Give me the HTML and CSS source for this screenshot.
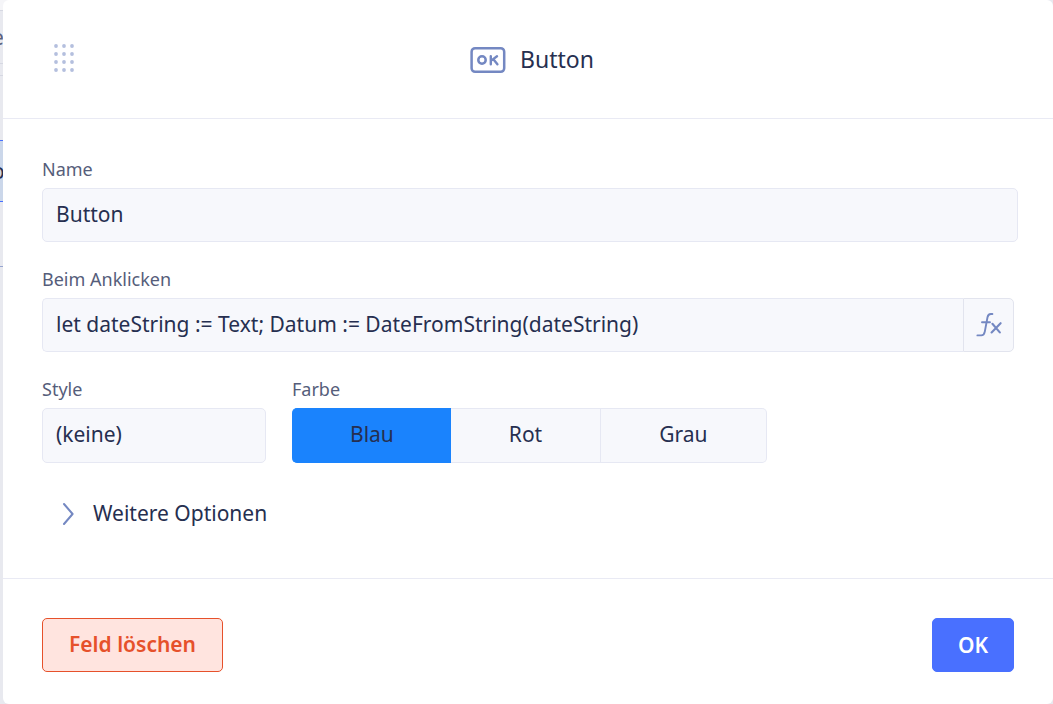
FILE: index.html
```html
<!DOCTYPE html>
<html lang="de">
<head>
<meta charset="utf-8">
<meta name="viewport" content="width=device-width, initial-scale=1">
<title>Button</title>
<link rel="stylesheet" href="styles.css">
</head>
<body>
<div class="backdrop" aria-hidden="true">
  <div class="strip strip-top"></div>
  <div class="strip strip-head"><span>e</span></div>
  <div class="strip strip-gap"></div>
  <div class="strip strip-space"></div>
  <div class="strip strip-selected"><span>o</span></div>
  <div class="strip strip-row"></div>
</div>
<main class="dialog">
  <header class="header">
    <svg class="grip" width="22" height="30" viewBox="0 0 22 30" fill="#b4bfde" aria-hidden="true">
      <circle cx="3" cy="3" r="1.9"/><circle cx="11" cy="3" r="1.9"/><circle cx="19" cy="3" r="1.9"/>
      <circle cx="3" cy="11" r="1.9"/><circle cx="11" cy="11" r="1.9"/><circle cx="19" cy="11" r="1.9"/>
      <circle cx="3" cy="19" r="1.9"/><circle cx="11" cy="19" r="1.9"/><circle cx="19" cy="19" r="1.9"/>
      <circle cx="3" cy="27" r="1.9"/><circle cx="11" cy="27" r="1.9"/><circle cx="19" cy="27" r="1.9"/>
    </svg>
    <h1 class="title">
      <svg width="36" height="28" viewBox="0 0 36 28" fill="none" stroke="#7488c2" aria-hidden="true">
        <rect x="1.6" y="2.2" width="32.6" height="23.6" rx="3.5" stroke-width="2.5"/>
        <circle cx="12" cy="14" r="3.7" stroke-width="2.5"/>
        <path d="M20.8 10.2v8M27 10.2L21.5 14.4M23.4 13.2l4 5" stroke-width="2.4" stroke-linecap="round"/>
      </svg>
      <span>Button</span>
    </h1>
  </header>
  <form class="body">
    <div class="field field-wide">
      <label for="name">Name</label>
      <input class="box" id="name" type="text" value="Button">
    </div>
    <div class="field">
      <label for="click">Beim Anklicken</label>
      <div class="formula">
        <input class="box" id="click" type="text" value="let dateString := Text; Datum := DateFromString(dateString)">
        <button class="fx" type="button" aria-label="Formel bearbeiten">
          <svg width="26" height="26" viewBox="0 0 26 26" fill="none" stroke="#7488c2" stroke-width="1.9" stroke-linecap="round" stroke-linejoin="round" aria-hidden="true">
            <path d="M16.4 2h-1.6c-2 0-2.9 1.2-3.3 3.3L8.8 19.6c-.5 2.5-1.6 3.8-3.6 3.8H1.4M6 10.2h8"/>
            <path d="M16.4 11.8l7.4 8.6M24.6 11.2l-9 9.2" stroke-width="2.1"/>
          </svg>
        </button>
      </div>
    </div>
    <div class="row">
      <div class="field style-field">
        <label for="style">Style</label>
        <select class="box" id="style"><option>(keine)</option></select>
      </div>
      <fieldset class="field color-field">
        <legend>Farbe</legend>
        <div class="segments">
          <label class="segment"><input type="radio" name="color" checked><span>Blau</span></label>
          <label class="segment"><input type="radio" name="color"><span>Rot</span></label>
          <label class="segment"><input type="radio" name="color"><span>Grau</span></label>
        </div>
      </fieldset>
    </div>
    <button class="more" type="button">
      <svg width="12" height="24" viewBox="0 0 12 24" fill="none" stroke="#7488c2" stroke-width="2" stroke-linecap="round" stroke-linejoin="round" aria-hidden="true"><path d="M2 2l8.6 10L2 22"/></svg>
      <span>Weitere Optionen</span>
    </button>
  </form>
  <footer class="footer">
    <button class="action delete" type="button">Feld löschen</button>
    <button class="action ok" type="button">OK</button>
  </footer>
</main>
</body>
</html>
```
FILE: styles.css
```css
*, *::before, *::after { box-sizing: border-box; }

body {
  margin: 0;
  min-height: 100vh;
  display: flex;
  background: #e8e9ef;
  color: #262f50;
  font-family: "Noto Sans", sans-serif;
  font-size: 21px;
  line-height: 28px;
}

button, input, select { font: inherit; color: inherit; margin: 0; }

.backdrop {
  position: absolute;
  inset: 0 auto 0 0;
  width: 12px;
  overflow: hidden;
}
.strip {
  display: flex;
  align-items: center;
  border-bottom: 1px solid #d6d8e2;
}
.strip span { margin-left: -8px; }
.strip-top { height: 11px; background: #f5f5f8; }
.strip-head { height: 53px; color: #5b6280; }
.strip-gap { height: 12px; }
.strip-space { height: 65px; border-bottom-color: #4870ff; }
.strip-selected { height: 61px; background: #cbd7ea; border-bottom-color: #4870ff; }
.strip-row { height: 65px; border-bottom-color: #97a5d0; }

.dialog {
  position: relative;
  flex: 1;
  display: flex;
  flex-direction: column;
  min-width: 0;
  margin-left: 3px;
  background: #fff;
  border-radius: 6px;
}

.header {
  display: grid;
  grid-template-columns: 1fr auto 1fr;
  align-items: center;
  padding: 42px 42px 40px 50px;
  border-bottom: 1px solid #e9eaf4;
}
.grip { display: block; margin-bottom: 5px; }
.title {
  display: flex;
  align-items: center;
  gap: 14px;
  margin: 0;
  font-size: 23px;
  font-weight: 400;
  line-height: 34px;
}
.title span { padding-bottom: 2px; }

.body {
  display: flex;
  flex-direction: column;
  gap: 25px;
  padding: 38px 39px 49px;
}
.field {
  display: flex;
  flex-direction: column;
  gap: 7px;
  min-width: 0;
  margin: 0;
  padding: 0;
  border: 0;
}
.field-wide { margin-right: -4px; }
.field > label, .field > legend {
  padding: 0;
  color: #555d7a;
  font-size: 18px;
  line-height: 24px;
}
.field > legend { margin-bottom: 7px; }

.box {
  width: 100%;
  height: 54px;
  padding: 0 13px 3px;
  border: 1px solid #e6e8f3;
  border-radius: 5px;
  outline: 0;
  background: #f7f8fc;
  appearance: none;
}
.formula { display: flex; }
.formula .box { flex: 1; border-radius: 5px 0 0 5px; border-right: 0; }
.fx {
  display: grid;
  place-items: center;
  width: 51px;
  padding: 0;
  border: 1px solid #e2e4ee;
  border-radius: 0 5px 5px 0;
  background: #f7f8fc;
}

.row { display: flex; gap: 26px; }
.style-field { width: 224px; }
.style-field .box { height: 55px; }
.segments { display: flex; height: 55px; }
.segment { position: relative; display: flex; }
.segment input {
  position: absolute;
  inset: 0;
  width: 100%;
  height: 100%;
  opacity: 0;
}
.segment span {
  padding: 11px 58px 14px;
  border: 1px solid #e6e8f3;
  border-left: 0;
  background: #f7f8fc;
}
.segment:first-child span { padding-right: 56px; border-radius: 5px 0 0 5px; }
.segment:last-child span { border-radius: 0 5px 5px 0; }
.segment input:checked + span { background: #1a83fd; border-color: #1a83fd; }

.more {
  display: flex;
  align-items: center;
  gap: 19px;
  align-self: flex-start;
  margin-top: 11px;
  padding: 0 0 0 20px;
  border: 0;
  background: none;
}
.more span { padding-bottom: 2px; }

.footer {
  flex: 1;
  display: flex;
  justify-content: space-between;
  align-items: flex-start;
  padding: 39px 39px 32px;
  border-top: 1px solid #e9eaf4;
}
.action {
  height: 54px;
  padding: 0 26px;
  border: 1px solid;
  border-radius: 5px;
  font-weight: 600;
}
.delete { border-color: #e6512b; background: #ffe4df; color: #e6512b; padding-bottom: 2px; }
.ok { border-color: #4970ff; background: #4970ff; color: #fff; padding: 0 25px; }
```
